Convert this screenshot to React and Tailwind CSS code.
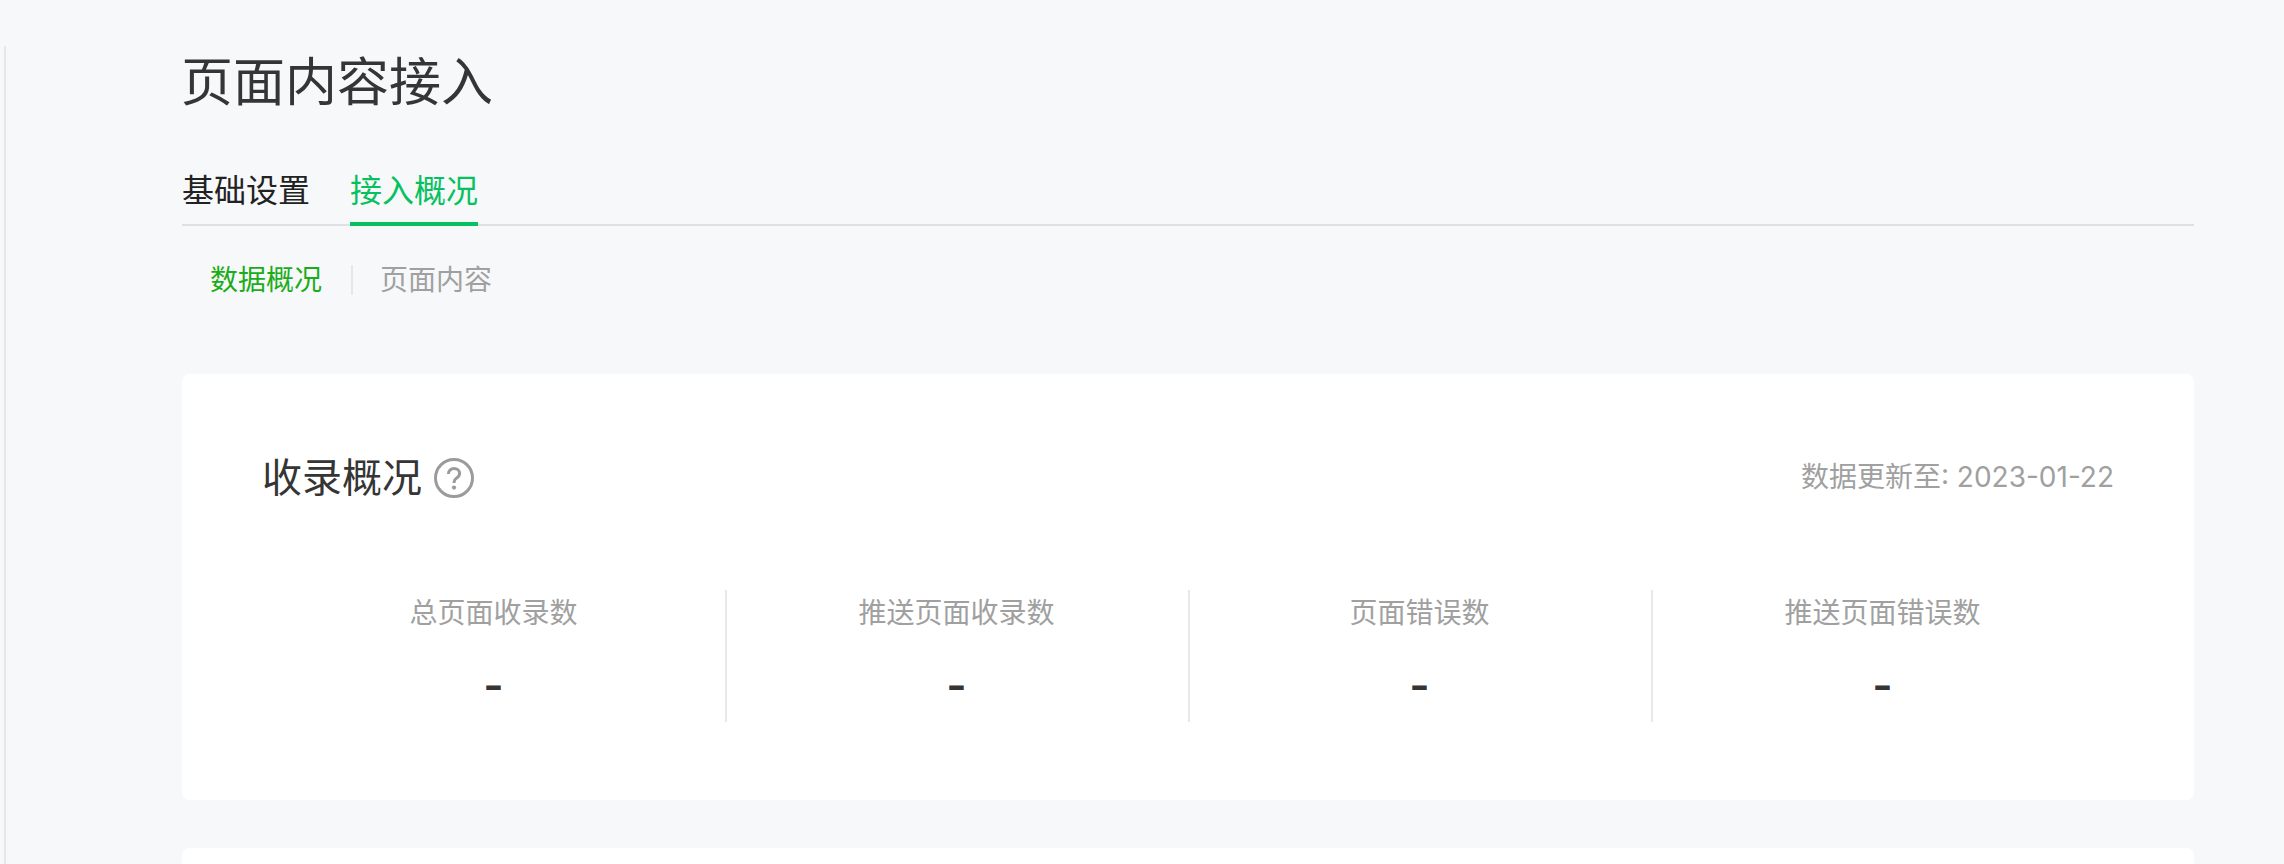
const FONT = "font-['Inter','Noto_Sans_CJK_SC',sans-serif]";

const metrics = ["总页面收录数", "推送页面收录数", "页面错误数", "推送页面错误数"];

const HelpIcon = () => (
  <svg width="40" height="40" viewBox="0 0 40 40" fill="none" className="shrink-0">
    <circle cx="20" cy="20" r="18.5" stroke="#9b9b9b" strokeWidth="3" />
    <path d="M14.4 16c0-3.2 2.4-5.4 5.6-5.4s5.6 2 5.6 4.9c0 2.3-1.2 3.4-2.9 4.6-1.6 1.1-2.6 2.1-2.6 4v.9" stroke="#9b9b9b" strokeWidth="3" />
    <circle cx="20" cy="29.6" r="2.1" fill="#9b9b9b" />
  </svg>
);

export default function App() {
  return (
    <div className={`${FONT} flex h-[864px] overflow-hidden bg-[#f7f8fa]`}>
      <div className="ml-1 mt-[46px] w-[2px] shrink-0 bg-[#e6e7e9]" />

      <main className="ml-[176px] w-[2012px] shrink-0">
        <h1 className="-ml-px mt-[48px] h-[70px] text-[52px] leading-[70px] font-normal text-[#353535]">页面内容接入</h1>

        <div className="mt-[40px] flex h-[68px] gap-10 border-b-2 border-[#e0e1e3]">
          <div className="h-[68px] pt-[11px] text-[32px] leading-[44px] text-[#222222]">基础设置</div>
          <div className="h-[68px] border-b-4 border-[#07c160] pt-[11px] text-[32px] leading-[44px] text-[#07c160]">接入概况</div>
        </div>

        <div className="mt-[39px] flex h-[30px] items-center pl-[28px] text-[28px] leading-[30px]">
          <span className="text-[#1aad19]">数据概况</span>
          <span className="ml-[29px] mr-[27px] h-[30px] w-[2px] bg-[#e6e7e9]" />
          <span className="text-[#a0a0a0]">页面内容</span>
        </div>

        <section className="mt-[79px] h-[426px] rounded-lg bg-white px-20">
          <div className="flex items-center justify-between pt-[84px]">
            <div className="flex items-center gap-3">
              <h2 className="text-[40px] leading-[40px] font-normal text-[#353535]">收录概况</h2>
              <HelpIcon />
            </div>
            <div className="-mt-[2px] text-[28px] leading-[40px] text-[#a0a0a0]">数据更新至: 2023-01-22</div>
          </div>

          <div className="mt-[92px] grid grid-cols-4">
            {metrics.map((label, i) => (
              <div key={label} className={`h-[132px] text-center ${i > 0 ? "border-l-2 border-[#e8e8e8] pr-[2px]" : ""}`}>
                <div className="mt-[4px] text-[28px] leading-[38px] text-[#a0a0a0]">{label}</div>
                <div className="mt-[25px] text-[44px] leading-[56px] font-semibold text-[#353535]">-</div>
              </div>
            ))}
          </div>
        </section>

        <section className="mt-[48px] h-[100px] rounded-lg bg-white" />
      </main>
    </div>
  );
}
